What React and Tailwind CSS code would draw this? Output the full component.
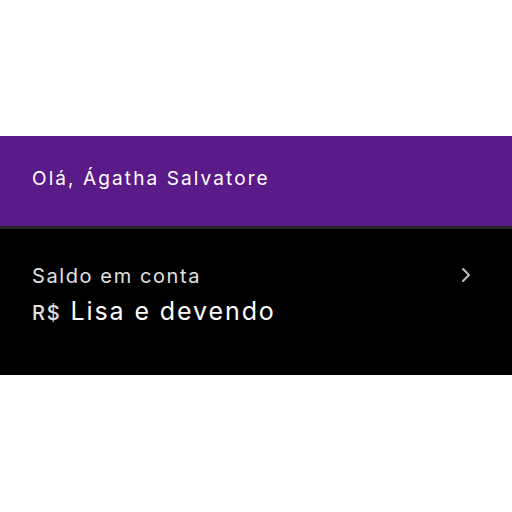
export default function App() {
  return (
    <div className="w-[512px] h-[512px] bg-white flex flex-col font-['Inter',sans-serif]">
      <div className="h-[136px]" />
      <div className="h-[90px] bg-[#5a1b88] px-8 pt-[31px]">
        <span className="block text-white text-[19px] leading-[24px] tracking-[2.1px]">Olá, Ágatha Salvatore</span>
      </div>
      <div className="h-[3px] bg-[#262626]" />
      <div className="h-[146px] bg-black flex items-start justify-between pl-8 pt-[35px]">
        <div className="flex flex-col">
          <span className="text-[#e0e0e0] text-[20px] leading-[24px] tracking-[1.6px]">Saldo em conta</span>
          <div className="flex items-baseline gap-[9px] mt-[8px] leading-[30px]">
            <span className="text-[#e0e0e0] text-[20px] font-medium tracking-[1.8px]">R$</span>
            <span className="text-white text-[25px] tracking-[1.9px]">Lisa e devendo</span>
          </div>
        </div>
        <svg width="10" height="16" viewBox="0 0 10 16" className="mt-[3px] mr-[41px]" fill="none" stroke="#bdbdbd" strokeWidth="2" strokeLinecap="round" strokeLinejoin="round">
          <path d="M2 2l6 6-6 6" />
        </svg>
      </div>
    </div>
  );
}
